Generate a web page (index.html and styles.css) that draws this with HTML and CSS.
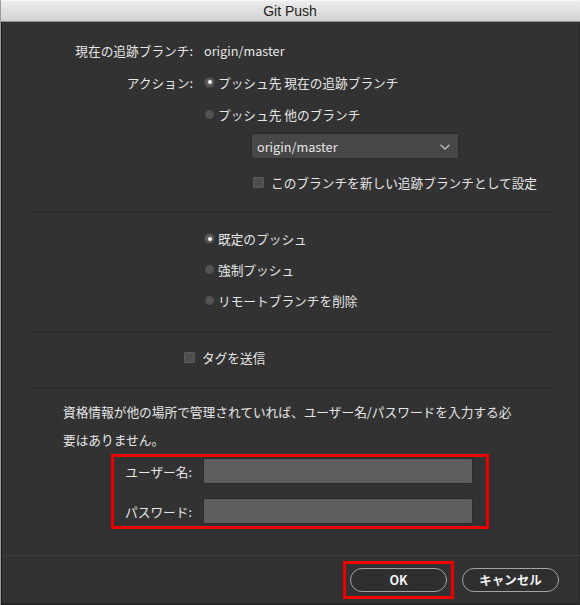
FILE: index.html
```html
<!DOCTYPE html>
<html lang="ja">
<head>
<meta charset="utf-8">
<title>Git Push</title>
<link rel="stylesheet" href="styles.css">
</head>
<body>
<div class="window">
  <div class="titlebar">Git Push</div>
  <div class="content">
    <section class="section section-branch">
      <div class="row">
        <span class="label">現在の追跡ブランチ:</span>
        <span class="value">origin/master</span>
      </div>
      <div class="row">
        <span class="label">アクション:</span>
        <span class="value option"><span class="radio checked"></span>プッシュ先 現在の追跡ブランチ</span>
      </div>
      <div class="row">
        <span class="label"></span>
        <span class="value option"><span class="radio"></span>プッシュ先 他のブランチ</span>
      </div>
      <div class="select">
        <span>origin/master</span>
        <svg class="chevron" width="10" height="6" viewBox="0 0 10 6"><path d="M0.5 0.8 L5 5 L9.5 0.8" fill="none" stroke="#bdbdbd" stroke-width="1.3"/></svg>
      </div>
      <div class="row track">
        <span class="option"><span class="checkbox"></span>このブランチを新しい追跡ブランチとして設定</span>
      </div>
    </section>

    <section class="section section-mode">
      <div class="row short"><span class="option"><span class="radio checked"></span>既定のプッシュ</span></div>
      <div class="row short"><span class="option"><span class="radio"></span>強制プッシュ</span></div>
      <div class="row short"><span class="option"><span class="radio"></span>リモートブランチを削除</span></div>
    </section>

    <section class="section section-tags">
      <div class="row"><span class="option"><span class="checkbox"></span>タグを送信</span></div>
    </section>

    <section class="section-auth">
      <p class="note">資格情報が他の場所で管理されていれば、ユーザー名/パスワードを入力する必要はありません。</p>
      <div class="cred highlight">
        <label class="cred-label" for="user">ユーザー名:</label>
        <input class="field" id="user" type="text">
        <label class="cred-label" for="pass">パスワード:</label>
        <input class="field" id="pass" type="password">
      </div>
    </section>
  </div>
  <div class="footer">
    <div class="highlight ok-wrap"><button class="btn">OK</button></div>
    <button class="btn">キャンセル</button>
  </div>
</div>
</body>
</html>
```

FILE: styles.css
```css
* { box-sizing: border-box; }

html, body {
  margin: 0;
  padding: 0;
  background: #323232;
}

body {
  font-family: "Noto Sans CJK JP", "Liberation Sans", sans-serif;
  font-size: 12.7px;
  color: #e6e6e6;
}

.window {
  width: 580px;
  height: 605px;
  display: flex;
  flex-direction: column;
  background: #323232;
  border-left: 1px solid #9a9a9a;
  box-shadow: inset 1px 0 0 #1b1b1b, inset -1px 0 0 #2a2a2a, inset 0 -2px 0 #262626;
  overflow: hidden;
}

.titlebar {
  height: 22px;
  flex: none;
  background: linear-gradient(#ececec, #d3d3d3);
  border-top: 1px solid #f6f6f6;
  border-bottom: 1px solid #8e8e8e;
  color: #222;
  font-family: "Liberation Sans", "Noto Sans", sans-serif;
  font-size: 14px;
  line-height: 20px;
  text-align: center;
  margin-left: -1px;
}

.content {
  padding: 0 27px 0 26px;
  flex: 1;
}

.section {
  border-bottom: 1px solid #2a2a2a;
}

.section-branch { padding: 12px 0 14px; }
.section-mode { padding: 10px 0 15px; }
.section-tags { padding: 9px 0 15px; }

.row {
  display: flex;
  align-items: center;
  height: 32px;
  white-space: nowrap;
}

.row.short { height: 31px; }

.label {
  width: 166px;
  text-align: right;
  flex: none;
}

.value { margin-left: 11px; }

.option {
  display: inline-flex;
  align-items: center;
}

.radio {
  width: 11px;
  height: 11px;
  border-radius: 50%;
  background: #535353;
  box-shadow: inset 0 0 0 1px #2c2c2c;
  margin-right: 3px;
  position: relative;
  flex: none;
}

.radio.checked {
  background: #5c5c5c;
  box-shadow: inset 0 0 0 1px #3a3a3a;
}

.radio.checked::after {
  content: "";
  position: absolute;
  left: 3.5px;
  top: 3.5px;
  width: 4px;
  height: 4px;
  border-radius: 50%;
  background: #f6f6f6;
}

.checkbox {
  width: 11px;
  height: 11px;
  border-radius: 2px;
  background: #4e4e4e;
  box-shadow: inset 0 0 0 1px #5c5c5c;
  margin-right: 7px;
  flex: none;
}

.section-mode .row { padding-left: 177px; }

.section-tags .row { padding-left: 157px; }

.select {
  margin: 3px 0 0 224px;
  width: 208px;
  height: 26px;
  background: #474747;
  border: 1px solid #2b2b2b;
  border-radius: 2px;
  display: flex;
  align-items: center;
  justify-content: space-between;
  padding: 0 8px 0 5px;
}

.chevron { margin-top: 1px; }

.row.track {
  margin-top: 7px;
  padding-left: 226px;
}

.section-auth { padding-top: 9px; }

.note {
  margin: 0 0 0 36px;
  width: 458px;
  line-height: 28px;
}

.highlight {
  border: 3px solid #ee0000;
}

.cred {
  margin-left: 84px;
  width: 378px;
  display: grid;
  grid-template-columns: 78px 270px;
  column-gap: 11px;
  row-gap: 14px;
  align-items: center;
  padding: 1px 0 2px;
}

.cred-label {
  text-align: right;
  white-space: nowrap;
}

.field {
  height: 26px;
  width: 270px;
  margin: 0;
  background: #5e5e5e;
  border: 1px solid #2b2b2b;
  border-radius: 2px;
  outline: none;
}

.footer {
  flex: none;
  height: 50px;
  border-top: 1px solid #3d3d3d;
  margin-left: 1px;
  display: flex;
  align-items: center;
  justify-content: flex-end;
  gap: 8px;
  padding: 0 21px 2px 0;
}

.ok-wrap {
  padding: 4px;
  display: flex;
}

.btn {
  width: 97px;
  height: 24px;
  border-radius: 12px;
  border: 1.5px solid #a4a4a4;
  background: #2f2f2f;
  color: #f2f2f2;
  font-family: "Noto Sans CJK JP", "Liberation Sans", sans-serif;
  font-size: 12.5px;
  font-weight: 700;
  padding: 0;
  line-height: 20px;
}
```
